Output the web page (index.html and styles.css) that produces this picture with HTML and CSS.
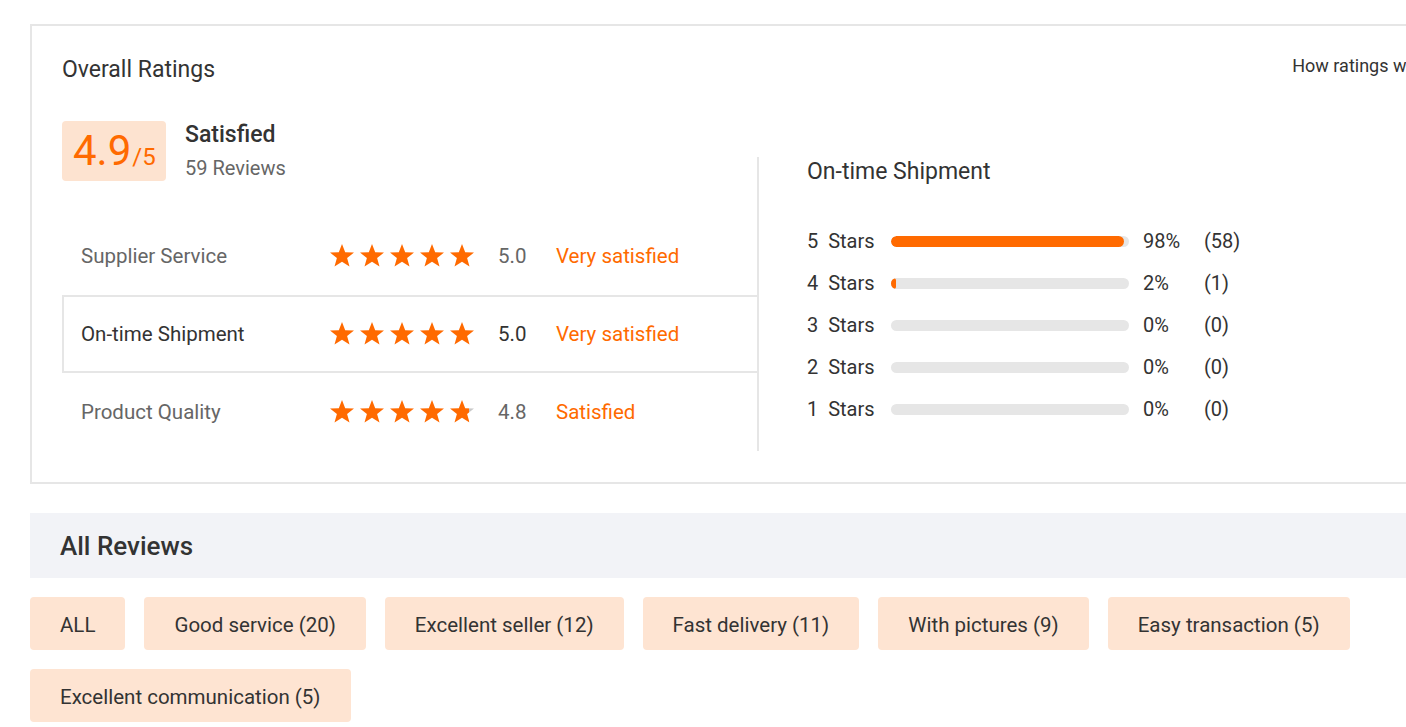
FILE: index.html
```html
<!DOCTYPE html>
<html lang="en">
<head>
<meta charset="utf-8">
<title>Ratings</title>
<link rel="stylesheet" href="styles.css">
</head>
<body>
<svg width="0" height="0" class="defs" aria-hidden="true">
  <defs>
    <symbol id="star" viewBox="0 0 26 26">
      <polygon points="13,1 16.2,9.3 25,9.6 18.1,15.1 20.5,23.6 13,18.7 5.5,23.6 7.9,15.1 1,9.6 9.8,9.3"/>
    </symbol>
  </defs>
</svg>
<div class="page">
  <section class="card">
    <header class="card-head">
      <h2 class="card-title">Overall Ratings</h2>
      <a class="how">How ratings work</a>
    </header>
    <div class="card-body">
      <div class="left">
        <div class="summary">
          <div class="score"><span class="big">4.9</span><span class="of">/5</span></div>
          <div class="summary-text">
            <div class="verdict">Satisfied</div>
            <div class="count">59 Reviews</div>
          </div>
        </div>
        <div class="rows">
          <div class="row">
            <span class="label">Supplier Service</span>
            <span class="stars">
              <svg class="star"><use href="#star"/></svg><svg class="star"><use href="#star"/></svg><svg class="star"><use href="#star"/></svg><svg class="star"><use href="#star"/></svg><svg class="star"><use href="#star"/></svg>
            </span>
            <span class="num">5.0</span>
            <span class="word">Very satisfied</span>
          </div>
          <div class="row active">
            <span class="label">On-time Shipment</span>
            <span class="stars">
              <svg class="star"><use href="#star"/></svg><svg class="star"><use href="#star"/></svg><svg class="star"><use href="#star"/></svg><svg class="star"><use href="#star"/></svg><svg class="star"><use href="#star"/></svg>
            </span>
            <span class="num">5.0</span>
            <span class="word">Very satisfied</span>
          </div>
          <div class="row">
            <span class="label">Product Quality</span>
            <span class="stars">
              <svg class="star"><use href="#star"/></svg><svg class="star"><use href="#star"/></svg><svg class="star"><use href="#star"/></svg><svg class="star"><use href="#star"/></svg><svg class="star" viewBox="0 0 26 26"><defs><linearGradient id="part" gradientUnits="userSpaceOnUse" x1="0" x2="26" y1="0" y2="0"><stop offset="0.76" stop-color="#ff6a00"/><stop offset="0.76" stop-color="#c8c8c8"/></linearGradient></defs><polygon fill="url(#part)" points="13,1 16.2,9.3 25,9.6 18.1,15.1 20.5,23.6 13,18.7 5.5,23.6 7.9,15.1 1,9.6 9.8,9.3"/></svg>
            </span>
            <span class="num">4.8</span>
            <span class="word">Satisfied</span>
          </div>
        </div>
      </div>
      <div class="right">
        <h3 class="dist-title">On-time Shipment</h3>
        <div class="dist">
          <div class="dist-row"><span class="dl">5&nbsp;&nbsp;Stars</span><span class="bar"><span class="fill" style="width:98%"></span></span><span class="pct">98%</span><span class="cnt">(58)</span></div>
          <div class="dist-row"><span class="dl">4&nbsp;&nbsp;Stars</span><span class="bar"><span class="fill" style="width:2%"></span></span><span class="pct">2%</span><span class="cnt">(1)</span></div>
          <div class="dist-row"><span class="dl">3&nbsp;&nbsp;Stars</span><span class="bar"><span class="fill" style="width:0%"></span></span><span class="pct">0%</span><span class="cnt">(0)</span></div>
          <div class="dist-row"><span class="dl">2&nbsp;&nbsp;Stars</span><span class="bar"><span class="fill" style="width:0%"></span></span><span class="pct">0%</span><span class="cnt">(0)</span></div>
          <div class="dist-row"><span class="dl">1&nbsp;&nbsp;Stars</span><span class="bar"><span class="fill" style="width:0%"></span></span><span class="pct">0%</span><span class="cnt">(0)</span></div>
        </div>
      </div>
    </div>
  </section>

  <div class="all-head">All Reviews</div>
  <div class="tags">
    <span class="tag">ALL</span>
    <span class="tag">Good service (20)</span>
    <span class="tag">Excellent seller (12)</span>
    <span class="tag">Fast delivery (11)</span>
    <span class="tag">With pictures (9)</span>
    <span class="tag">Easy transaction (5)</span>
    <span class="tag">Excellent communication (5)</span>
  </div>
</div>
</body>
</html>
```

FILE: styles.css
```css
html, body {
  margin: 0;
  padding: 0;
  background: #fff;
  overflow: hidden;
}
body {
  font-family: Roboto, "Liberation Sans", Arial, sans-serif;
  color: #333;
}
.defs {
  position: absolute;
  width: 0;
  height: 0;
}
.page {
  padding: 24px 0 0 30px;
  width: 1434px;
}
.card {
  border: 2px solid #e6e6e6;
  padding: 30px 30px 31px 30px;
  width: 1434px;
  box-sizing: border-box;
}
.card-head {
  display: flex;
  align-items: flex-start;
  justify-content: space-between;
}
.card-title {
  margin: 0;
  font-size: 23px;
  line-height: 28px;
  font-weight: 400;
  color: #333;
}
.how {
  font-size: 18px;
  line-height: 20px;
  color: #333;
  white-space: nowrap;
}
.card-body {
  display: flex;
  align-items: stretch;
  margin-top: 37px;
}
.left {
  width: 695px;
  flex: none;
}
.summary {
  display: flex;
  align-items: flex-start;
  gap: 19px;
}
.score {
  width: 104px;
  height: 60px;
  box-sizing: border-box;
  background: #fde3d0;
  border-radius: 4px;
  color: #ff6a00;
  padding-left: 11px;
  display: flex;
  align-items: baseline;
  padding-top: 4px;
}
.score .big {
  font-size: 42px;
  line-height: 52px;
  font-weight: 400;
}
.score .of {
  font-size: 24px;
  margin-left: 1px;
}
.verdict {
  font-size: 23px;
  line-height: 28px;
  font-weight: 500;
  color: #333;
}
.count {
  font-size: 20px;
  line-height: 26px;
  color: #666;
  margin-top: 6px;
}
.rows {
  margin-top: 36px;
}
.row {
  height: 78px;
  box-sizing: border-box;
  border: 2px solid transparent;
  border-right: 0;
  display: flex;
  align-items: center;
  padding-left: 17px;
  font-size: 20.5px;
  color: #666;
}
.row.active {
  border-color: #e6e6e6;
  color: #333;
}
.label {
  width: 248px;
  flex: none;
}
.stars {
  display: flex;
  gap: 4px;
  width: 146px;
  flex: none;
}
.star {
  width: 26px;
  height: 26px;
  fill: #ff6a00;
}
.num {
  margin-left: 23px;
  width: 58px;
  flex: none;
}
.word {
  color: #ff6a00;
}
.right {
  margin-top: 36px;
  border-left: 2px solid #e6e6e6;
  padding-left: 48px;
  flex: 1;
}
.dist-title {
  margin: 0;
  font-size: 23px;
  line-height: 30px;
  font-weight: 400;
  color: #333;
}
.dist {
  margin-top: 33px;
}
.dist-row {
  height: 42px;
  display: flex;
  align-items: center;
  font-size: 20px;
  color: #333;
}
.dl {
  width: 84px;
  flex: none;
}
.bar {
  width: 238px;
  height: 11px;
  background: #e6e6e6;
  border-radius: 6px;
  overflow: hidden;
  flex: none;
  display: flex;
}
.fill {
  background: #ff6a00;
  border-radius: 6px;
  height: 100%;
}
.pct {
  margin-left: 14px;
  width: 61px;
  flex: none;
}
.all-head {
  margin-top: 29px;
  height: 65px;
  background: #f2f3f7;
  padding-left: 30px;
  display: flex;
  align-items: center;
  font-size: 26px;
  font-weight: 500;
  color: #333;
  width: 1434px;
  box-sizing: border-box;
}
.tags {
  margin-top: 19px;
  display: flex;
  flex-wrap: wrap;
  gap: 19px 19px;
  width: 1400px;
}
.tag {
  height: 53px;
  box-sizing: border-box;
  padding: 3px 30px 0;
  background: #fee4d2;
  border-radius: 4px;
  display: flex;
  align-items: center;
  font-size: 20.5px;
  color: #333;
}
```
